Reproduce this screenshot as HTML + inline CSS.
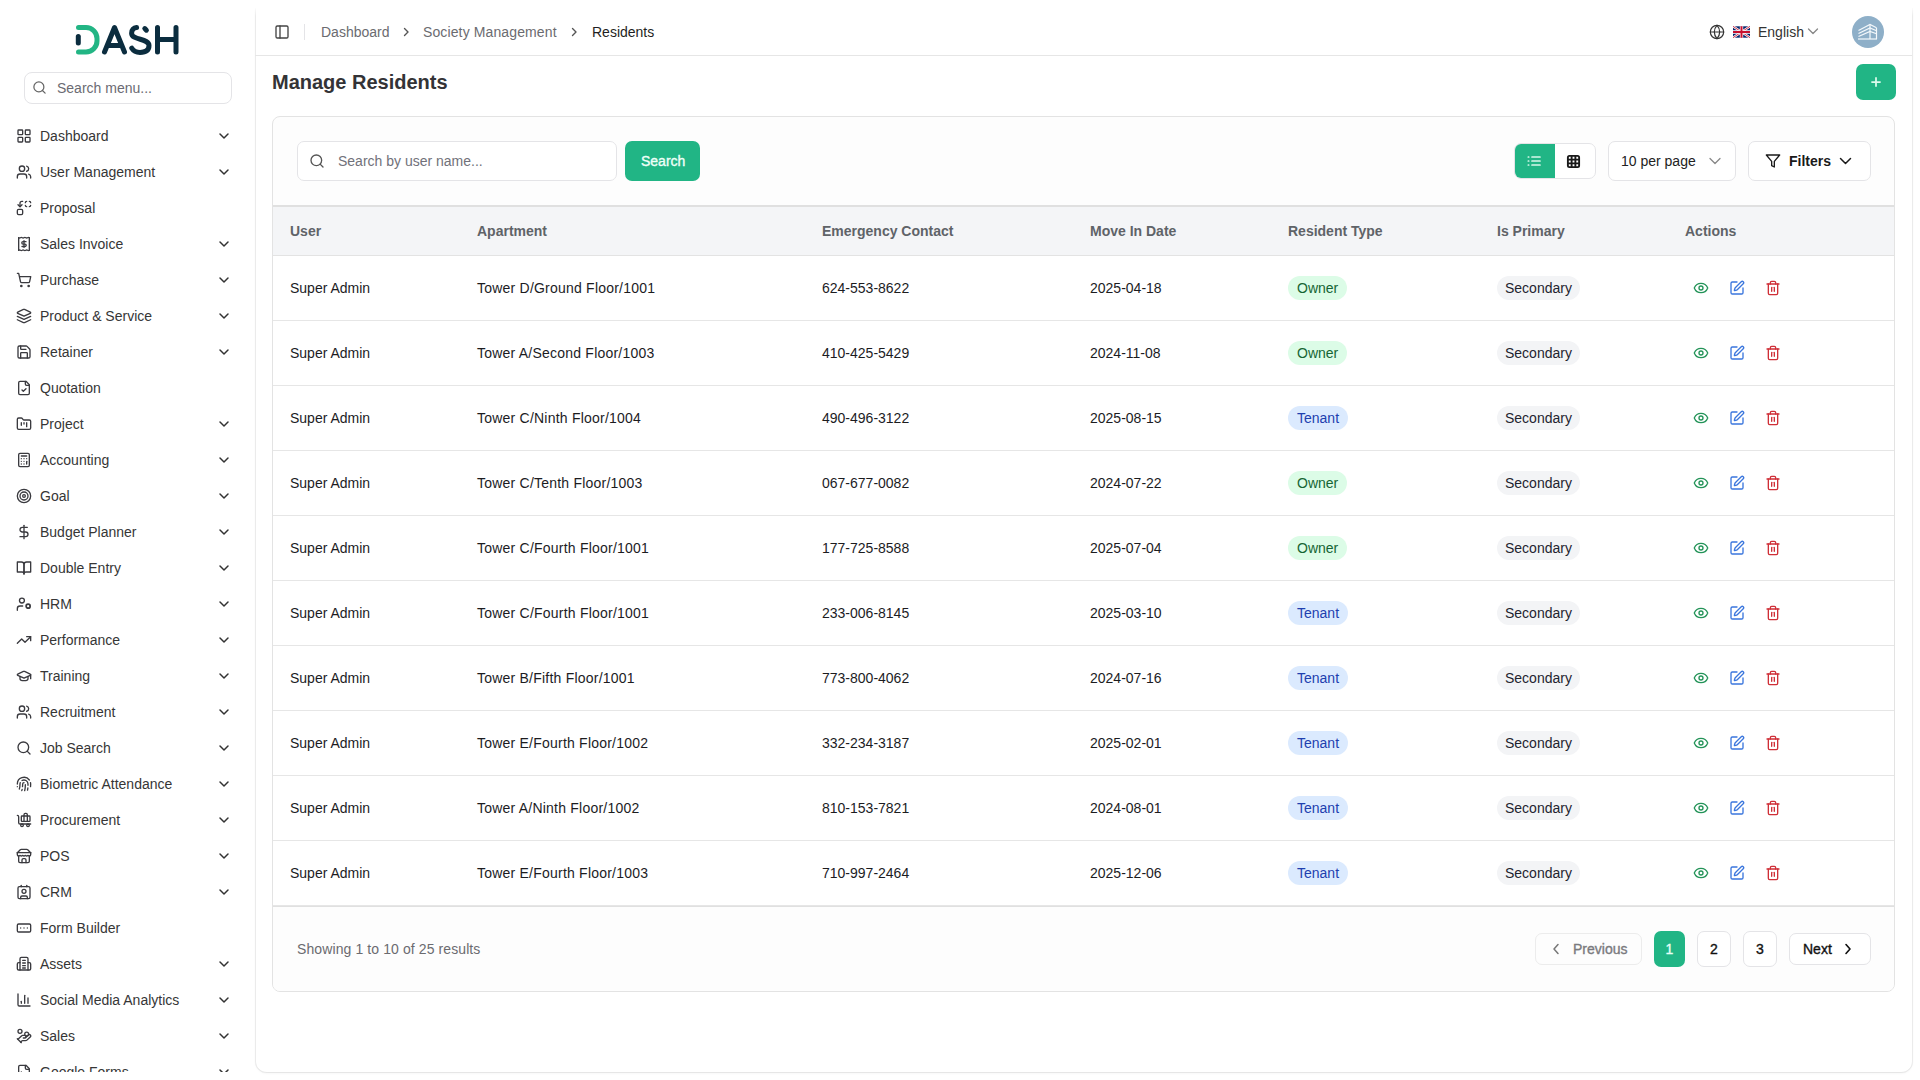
<!DOCTYPE html>
<html><head><meta charset="utf-8">
<style>
*{box-sizing:border-box;margin:0;padding:0}
html,body{width:1920px;height:1080px;overflow:hidden}
body{font-family:"Liberation Sans",sans-serif;font-size:14px;color:#1f2328;background:#fff;position:relative}
.abs{position:absolute}
svg{display:block}
/* sidebar */
#sb{position:absolute;left:0;top:0;width:255px;height:1080px;background:#fff}
#sbsearch{position:absolute;left:24px;top:72px;width:208px;height:32px;border:1px solid #e4e4e7;border-radius:8px;background:#fff}
#sbsearch .ph{position:absolute;left:32px;top:5px;line-height:20px;color:#6b6b73}
#menu{position:absolute;left:0;top:118px;width:255px;height:954px;overflow:hidden}
.mi{position:absolute;left:0;width:255px;height:36px}
.mi .ic{position:absolute;left:16px;top:10px;width:16px;height:16px;color:#3a3a3f}
.mi .t{position:absolute;left:40px;top:8px;line-height:20px;color:#363636;white-space:nowrap}
.mi .ch{position:absolute;left:216px;top:10px;width:16px;height:16px;color:#333}
/* main panel */
#panel{position:absolute;left:255px;top:8px;width:1658px;height:1065px;background:#fff;border-radius:0 0 12px 12px;box-shadow:inset 1px 0 0 #ebebeb,inset -1px 0 0 #ebebeb,inset 0 -1px 0 #e6e6e6,0 1px 2px rgba(0,0,0,.03)}
#ptopfade{position:absolute;left:240px;top:0;width:1680px;height:16px;background:linear-gradient(#fff 40%,rgba(255,255,255,0))}
#hdr{position:absolute;left:0;top:0;width:1657px;height:48px;border-bottom:1px solid #e6e6e6}
.bc{position:absolute;top:14px;line-height:20px;white-space:nowrap}
h1{position:absolute;left:17px;top:62px;font-size:20px;line-height:24px;font-weight:700;color:#333336;white-space:nowrap}
#card{position:absolute;left:17px;top:108px;width:1623px;height:876px;border:1px solid #e3e3e3;border-radius:8px;background:#fdfdfd;overflow:hidden}
.inp{position:absolute;background:#fff;border:1px solid #e4e4e7;border-radius:7px}
.btn-g{position:absolute;background:#21b585;border-radius:7px;color:#fff}
table{border-collapse:collapse}
#thead{position:absolute;left:0;top:88px;width:1621px;height:51px;background:#f4f5f7;border-top:2px solid #e0e0e0;border-bottom:1px solid #e3e3e3}
.th{position:absolute;top:14px;line-height:20px;font-weight:700;color:#5f6368;white-space:nowrap}
.row{position:absolute;left:0;width:1621px;height:65px;background:#fff;border-bottom:1px solid #e6e6e6}
.row .c{position:absolute;top:22px;line-height:20px;color:#1c1c1f;white-space:nowrap}
.badge{position:absolute;top:20px;height:24px;line-height:24px;padding:0 8px;border-radius:12px;white-space:nowrap}
.own{background:#dcfce7;color:#166534;padding:0 9px}
.ten{background:#dbeafe;color:#1e40af;padding:0 9px}
.sec{background:#f3f4f6;color:#1f2430}
.act{position:absolute;top:24px;width:16px;height:16px}
#foot{position:absolute;left:0;top:789px;width:1621px;height:86px;background:#fdfdfd;border-top:1px solid #e0e0e0}
.med{-webkit-text-stroke:0.35px currentColor}
.pg{position:absolute;border:1px solid #e4e4e7;border-radius:7px;background:#fff;text-align:center;white-space:nowrap}
</style></head>
<body>
<div id="sb">
  <!-- logo -->
  <svg class="abs" style="left:70px;top:18px" width="115" height="42" viewBox="70 18 115 42">
    <path d="M78.5 27.5 H86 A11 11 0 0 1 97 38.5 V41 A11 11 0 0 1 86 52 H78.5" fill="none" stroke="#22b584" stroke-width="5" stroke-linecap="round"/>
    <path d="M78.3 36.5 V43" stroke="#0b2d3f" stroke-width="5" stroke-linecap="round"/>
    <path d="M104.5 52 L114.5 27.5 L124.5 52 M108 45.5 H121" fill="none" stroke="#0b2d3f" stroke-width="5" stroke-linecap="round" stroke-linejoin="round"/>
    <path d="M136.6 27.5 C133.6 27.8 131.6 30 131.6 33.2 C131.6 40.5 149 38 149 45.5 C149 51 144.5 52.4 140 52.4 C136.5 52.4 133.5 51 131.8 48.2 M144.8 28.6 L146.4 30.2" fill="none" stroke="#0b2d3f" stroke-width="5" stroke-linecap="round"/>
    <path d="M157.5 27.5 V52 M176 27.5 V52 M157.5 39.5 H176" fill="none" stroke="#0b2d3f" stroke-width="5" stroke-linecap="round"/>
  </svg>
  <div id="sbsearch">
    <svg class="abs" style="left:7px;top:7px" width="15" height="15" viewBox="0 0 24 24" fill="none" stroke="#666" stroke-width="2" stroke-linecap="round"><circle cx="11" cy="11" r="8"/><path d="m21 21-4.3-4.3"/></svg>
    <span class="ph">Search menu...</span>
  </div>
  <div id="menu"><div class="mi" style="top:0px"><svg class="ic" viewBox="0 0 24 24" fill="none" stroke="currentColor" stroke-width="2" stroke-linecap="round" stroke-linejoin="round"><rect width="7" height="7" x="3" y="3" rx="1"/><rect width="7" height="7" x="14" y="3" rx="1"/><rect width="7" height="7" x="14" y="14" rx="1"/><rect width="7" height="7" x="3" y="14" rx="1"/></svg><span class="t">Dashboard</span><svg class="ch" viewBox="0 0 16 16" fill="none" stroke="currentColor" stroke-width="1.5" stroke-linecap="round" stroke-linejoin="round"><path d="M4 6 L8 10 L12 6"/></svg></div><div class="mi" style="top:36px"><svg class="ic" viewBox="0 0 24 24" fill="none" stroke="currentColor" stroke-width="2" stroke-linecap="round" stroke-linejoin="round"><path d="M16 21v-2a4 4 0 0 0-4-4H6a4 4 0 0 0-4 4v2"/><circle cx="9" cy="7" r="4"/><path d="M22 21v-2a4 4 0 0 0-3-3.87"/><path d="M16 3.13a4 4 0 0 1 0 7.75"/></svg><span class="t">User Management</span><svg class="ch" viewBox="0 0 16 16" fill="none" stroke="currentColor" stroke-width="1.5" stroke-linecap="round" stroke-linejoin="round"><path d="M4 6 L8 10 L12 6"/></svg></div><div class="mi" style="top:72px"><svg class="ic" viewBox="0 0 24 24" fill="none" stroke="currentColor" stroke-width="2" stroke-linecap="round" stroke-linejoin="round"><path d="M14 4a2 2 0 0 1 2-2"/><path d="M16 10a2 2 0 0 1-2-2"/><path d="M20 2a2 2 0 0 1 2 2"/><path d="M22 8a2 2 0 0 1-2 2"/><path d="m3 7 3 3 3-3"/><path d="M6 10V5a3 3 0 0 1 3-3h1"/><rect x="2" y="14" width="8" height="8" rx="2"/></svg><span class="t">Proposal</span></div><div class="mi" style="top:108px"><svg class="ic" viewBox="0 0 24 24" fill="none" stroke="currentColor" stroke-width="2" stroke-linecap="round" stroke-linejoin="round"><path d="M4 2.5V21.5M20 2.5V21.5"/><path d="M4 2.5q1.33 1 2.67 0t2.67 0t2.67 0t2.67 0t2.67 0t2.67 0M4 21.5q1.33 -1 2.67 0t2.67 0t2.67 0t2.67 0t2.67 0t2.67 0"/><path d="M15 8.5h-4.5a1.8 1.8 0 0 0 0 3.6h3a1.8 1.8 0 0 1 0 3.6H9"/><path d="M12 7v10"/></svg><span class="t">Sales Invoice</span><svg class="ch" viewBox="0 0 16 16" fill="none" stroke="currentColor" stroke-width="1.5" stroke-linecap="round" stroke-linejoin="round"><path d="M4 6 L8 10 L12 6"/></svg></div><div class="mi" style="top:144px"><svg class="ic" viewBox="0 0 24 24" fill="none" stroke="currentColor" stroke-width="2" stroke-linecap="round" stroke-linejoin="round"><circle cx="8" cy="21" r="1"/><circle cx="19" cy="21" r="1"/><path d="M2.05 2.05h2l2.66 12.42a2 2 0 0 0 2 1.58h9.78a2 2 0 0 0 1.95-1.57l1.65-7.43H5.12"/></svg><span class="t">Purchase</span><svg class="ch" viewBox="0 0 16 16" fill="none" stroke="currentColor" stroke-width="1.5" stroke-linecap="round" stroke-linejoin="round"><path d="M4 6 L8 10 L12 6"/></svg></div><div class="mi" style="top:180px"><svg class="ic" viewBox="0 0 24 24" fill="none" stroke="currentColor" stroke-width="2" stroke-linecap="round" stroke-linejoin="round"><path d="m12.83 2.18a2 2 0 0 0-1.66 0L2.6 6.08a1 1 0 0 0 0 1.83l8.58 3.91a2 2 0 0 0 1.66 0l8.58-3.9a1 1 0 0 0 0-1.83Z"/><path d="m22 17.65-9.17 4.16a2 2 0 0 1-1.66 0L2 17.65"/><path d="m22 12.65-9.17 4.16a2 2 0 0 1-1.66 0L2 12.65"/></svg><span class="t">Product &amp; Service</span><svg class="ch" viewBox="0 0 16 16" fill="none" stroke="currentColor" stroke-width="1.5" stroke-linecap="round" stroke-linejoin="round"><path d="M4 6 L8 10 L12 6"/></svg></div><div class="mi" style="top:216px"><svg class="ic" viewBox="0 0 24 24" fill="none" stroke="currentColor" stroke-width="2" stroke-linecap="round" stroke-linejoin="round"><path d="M15.2 3a2 2 0 0 1 1.4.6l3.8 3.8a2 2 0 0 1 .6 1.4V19a2 2 0 0 1-2 2H5a2 2 0 0 1-2-2V5a2 2 0 0 1 2-2z"/><path d="M17 21v-7a1 1 0 0 0-1-1H8a1 1 0 0 0-1 1v7"/><path d="M7 3v4a1 1 0 0 0 1 1h7"/></svg><span class="t">Retainer</span><svg class="ch" viewBox="0 0 16 16" fill="none" stroke="currentColor" stroke-width="1.5" stroke-linecap="round" stroke-linejoin="round"><path d="M4 6 L8 10 L12 6"/></svg></div><div class="mi" style="top:252px"><svg class="ic" viewBox="0 0 24 24" fill="none" stroke="currentColor" stroke-width="2" stroke-linecap="round" stroke-linejoin="round"><path d="M15 2H6a2 2 0 0 0-2 2v16a2 2 0 0 0 2 2h12a2 2 0 0 0 2-2V7Z"/><path d="M14 2v4a2 2 0 0 0 2 2h4"/><path d="m9 15 2 2 4-4"/></svg><span class="t">Quotation</span></div><div class="mi" style="top:288px"><svg class="ic" viewBox="0 0 24 24" fill="none" stroke="currentColor" stroke-width="2" stroke-linecap="round" stroke-linejoin="round"><path d="M4 20h16a2 2 0 0 0 2-2V8a2 2 0 0 0-2-2h-7.93a2 2 0 0 1-1.66-.9l-.82-1.2A2 2 0 0 0 7.93 3H4a2 2 0 0 0-2 2v13c0 1.1.9 2 2 2Z"/><path d="M8 10v4"/><path d="M12 10v2"/><path d="M16 10v6"/></svg><span class="t">Project</span><svg class="ch" viewBox="0 0 16 16" fill="none" stroke="currentColor" stroke-width="1.5" stroke-linecap="round" stroke-linejoin="round"><path d="M4 6 L8 10 L12 6"/></svg></div><div class="mi" style="top:324px"><svg class="ic" viewBox="0 0 24 24" fill="none" stroke="currentColor" stroke-width="2" stroke-linecap="round" stroke-linejoin="round"><rect width="16" height="20" x="4" y="2" rx="2"/><line x1="8" x2="16" y1="6" y2="6"/><line x1="16" x2="16" y1="14" y2="18"/><path d="M16 10h.01"/><path d="M12 10h.01"/><path d="M8 10h.01"/><path d="M12 14h.01"/><path d="M8 14h.01"/><path d="M12 18h.01"/><path d="M8 18h.01"/></svg><span class="t">Accounting</span><svg class="ch" viewBox="0 0 16 16" fill="none" stroke="currentColor" stroke-width="1.5" stroke-linecap="round" stroke-linejoin="round"><path d="M4 6 L8 10 L12 6"/></svg></div><div class="mi" style="top:360px"><svg class="ic" viewBox="0 0 24 24" fill="none" stroke="currentColor" stroke-width="2" stroke-linecap="round" stroke-linejoin="round"><circle cx="12" cy="12" r="10"/><circle cx="12" cy="12" r="6"/><circle cx="12" cy="12" r="2"/></svg><span class="t">Goal</span><svg class="ch" viewBox="0 0 16 16" fill="none" stroke="currentColor" stroke-width="1.5" stroke-linecap="round" stroke-linejoin="round"><path d="M4 6 L8 10 L12 6"/></svg></div><div class="mi" style="top:396px"><svg class="ic" viewBox="0 0 24 24" fill="none" stroke="currentColor" stroke-width="2" stroke-linecap="round" stroke-linejoin="round"><line x1="12" x2="12" y1="2" y2="22"/><path d="M17 5H9.5a3.5 3.5 0 0 0 0 7h5a3.5 3.5 0 0 1 0 7H6"/></svg><span class="t">Budget Planner</span><svg class="ch" viewBox="0 0 16 16" fill="none" stroke="currentColor" stroke-width="1.5" stroke-linecap="round" stroke-linejoin="round"><path d="M4 6 L8 10 L12 6"/></svg></div><div class="mi" style="top:432px"><svg class="ic" viewBox="0 0 24 24" fill="none" stroke="currentColor" stroke-width="2" stroke-linecap="round" stroke-linejoin="round"><path d="M2 3h6a4 4 0 0 1 4 4v14a3 3 0 0 0-3-3H2z"/><path d="M22 3h-6a4 4 0 0 0-4 4v14a3 3 0 0 1 3-3h7z"/></svg><span class="t">Double Entry</span><svg class="ch" viewBox="0 0 16 16" fill="none" stroke="currentColor" stroke-width="1.5" stroke-linecap="round" stroke-linejoin="round"><path d="M4 6 L8 10 L12 6"/></svg></div><div class="mi" style="top:468px"><svg class="ic" viewBox="0 0 24 24" fill="none" stroke="currentColor" stroke-width="2" stroke-linecap="round" stroke-linejoin="round"><circle cx="8.9" cy="6.8" r="3.7"/><path d="M2 21.5V19a4 4 0 0 1 4-4h4"/><circle cx="18.2" cy="15.2" r="3" stroke-width="2.6"/></svg><span class="t">HRM</span><svg class="ch" viewBox="0 0 16 16" fill="none" stroke="currentColor" stroke-width="1.5" stroke-linecap="round" stroke-linejoin="round"><path d="M4 6 L8 10 L12 6"/></svg></div><div class="mi" style="top:504px"><svg class="ic" viewBox="0 0 24 24" fill="none" stroke="currentColor" stroke-width="2" stroke-linecap="round" stroke-linejoin="round"><polyline points="22 7 13.5 15.5 8.5 10.5 2 17"/><polyline points="16 7 22 7 22 13"/></svg><span class="t">Performance</span><svg class="ch" viewBox="0 0 16 16" fill="none" stroke="currentColor" stroke-width="1.5" stroke-linecap="round" stroke-linejoin="round"><path d="M4 6 L8 10 L12 6"/></svg></div><div class="mi" style="top:540px"><svg class="ic" viewBox="0 0 24 24" fill="none" stroke="currentColor" stroke-width="2" stroke-linecap="round" stroke-linejoin="round"><path d="M21.42 10.922a1 1 0 0 0-.019-1.838L12.83 5.18a2 2 0 0 0-1.66 0L2.6 9.08a1 1 0 0 0 0 1.832l8.57 3.908a2 2 0 0 0 1.66 0z"/><path d="M22 10v6"/><path d="M6 12.5V16a6 3 0 0 0 12 0v-3.5"/></svg><span class="t">Training</span><svg class="ch" viewBox="0 0 16 16" fill="none" stroke="currentColor" stroke-width="1.5" stroke-linecap="round" stroke-linejoin="round"><path d="M4 6 L8 10 L12 6"/></svg></div><div class="mi" style="top:576px"><svg class="ic" viewBox="0 0 24 24" fill="none" stroke="currentColor" stroke-width="2" stroke-linecap="round" stroke-linejoin="round"><path d="M16 21v-2a4 4 0 0 0-4-4H6a4 4 0 0 0-4 4v2"/><circle cx="9" cy="7" r="4"/><path d="M22 21v-2a4 4 0 0 0-3-3.87"/><path d="M16 3.13a4 4 0 0 1 0 7.75"/></svg><span class="t">Recruitment</span><svg class="ch" viewBox="0 0 16 16" fill="none" stroke="currentColor" stroke-width="1.5" stroke-linecap="round" stroke-linejoin="round"><path d="M4 6 L8 10 L12 6"/></svg></div><div class="mi" style="top:612px"><svg class="ic" viewBox="0 0 24 24" fill="none" stroke="currentColor" stroke-width="2" stroke-linecap="round" stroke-linejoin="round"><circle cx="11" cy="11" r="8"/><path d="m21 21-4.3-4.3"/></svg><span class="t">Job Search</span><svg class="ch" viewBox="0 0 16 16" fill="none" stroke="currentColor" stroke-width="1.5" stroke-linecap="round" stroke-linejoin="round"><path d="M4 6 L8 10 L12 6"/></svg></div><div class="mi" style="top:648px"><svg class="ic" viewBox="0 0 24 24" fill="none" stroke="currentColor" stroke-width="2" stroke-linecap="round" stroke-linejoin="round"><path d="M12 10a2 2 0 0 0-2 2c0 1.02-.1 2.51-.26 4"/><path d="M14 13.12c0 2.38 0 6.38-1 8.88"/><path d="M17.29 21.02c.12-.6.43-2.3.5-3.02"/><path d="M2 12a10 10 0 0 1 18-6"/><path d="M2 16h.01"/><path d="M21.8 16c.2-2 .131-5.354 0-6"/><path d="M5 19.5C5.5 18 6 15 6 12a6 6 0 0 1 .34-2"/><path d="M8.65 22c.21-.66.45-1.32.57-2"/><path d="M9 6.8a6 6 0 0 1 9 5.2v2"/></svg><span class="t">Biometric Attendance</span><svg class="ch" viewBox="0 0 16 16" fill="none" stroke="currentColor" stroke-width="1.5" stroke-linecap="round" stroke-linejoin="round"><path d="M4 6 L8 10 L12 6"/></svg></div><div class="mi" style="top:684px"><svg class="ic" viewBox="0 0 24 24" fill="none" stroke="currentColor" stroke-width="2" stroke-linecap="round" stroke-linejoin="round"><path d="M22 18H6a2 2 0 0 1-2-2V7a2 2 0 0 0-2-2"/><path d="M17 14V4a2 2 0 0 0-2-2h-1a2 2 0 0 0-2 2v10"/><rect width="13" height="8" x="8" y="6" rx="1"/><circle cx="18" cy="20" r="2"/><circle cx="9" cy="20" r="2"/></svg><span class="t">Procurement</span><svg class="ch" viewBox="0 0 16 16" fill="none" stroke="currentColor" stroke-width="1.5" stroke-linecap="round" stroke-linejoin="round"><path d="M4 6 L8 10 L12 6"/></svg></div><div class="mi" style="top:720px"><svg class="ic" viewBox="0 0 24 24" fill="none" stroke="currentColor" stroke-width="2" stroke-linecap="round" stroke-linejoin="round"><path d="m2 7 4.41-4.41A2 2 0 0 1 7.83 2h8.34a2 2 0 0 1 1.42.59L22 7"/><path d="M4 12v8a2 2 0 0 0 2 2h12a2 2 0 0 0 2-2v-8"/><path d="M15 22v-4a2 2 0 0 0-2-2h-2a2 2 0 0 0-2 2v4"/><path d="M2 7h20"/><path d="M22 7v3a2 2 0 0 1-2 2a2.7 2.7 0 0 1-1.59-.63.7.7 0 0 0-.82 0A2.7 2.7 0 0 1 16 12a2.7 2.7 0 0 1-1.59-.63.7.7 0 0 0-.82 0A2.7 2.7 0 0 1 12 12a2.7 2.7 0 0 1-1.59-.63.7.7 0 0 0-.82 0A2.7 2.7 0 0 1 8 12a2.7 2.7 0 0 1-1.59-.63.7.7 0 0 0-.82 0A2.7 2.7 0 0 1 4 12a2 2 0 0 1-2-2V7"/></svg><span class="t">POS</span><svg class="ch" viewBox="0 0 16 16" fill="none" stroke="currentColor" stroke-width="1.5" stroke-linecap="round" stroke-linejoin="round"><path d="M4 6 L8 10 L12 6"/></svg></div><div class="mi" style="top:756px"><svg class="ic" viewBox="0 0 24 24" fill="none" stroke="currentColor" stroke-width="2" stroke-linecap="round" stroke-linejoin="round"><path d="M16 2v2"/><path d="M7 22v-2a2 2 0 0 1 2-2h6a2 2 0 0 1 2 2v2"/><path d="M8 2v2"/><circle cx="12" cy="11" r="3"/><rect x="3" y="4" width="18" height="18" rx="2"/></svg><span class="t">CRM</span><svg class="ch" viewBox="0 0 16 16" fill="none" stroke="currentColor" stroke-width="1.5" stroke-linecap="round" stroke-linejoin="round"><path d="M4 6 L8 10 L12 6"/></svg></div><div class="mi" style="top:792px"><svg class="ic" viewBox="0 0 24 24" fill="none" stroke="currentColor" stroke-width="2" stroke-linecap="round" stroke-linejoin="round"><rect width="20" height="12" x="2" y="6" rx="2"/><path d="M12 12h.01"/><path d="M17 12h.01"/><path d="M7 12h.01"/></svg><span class="t">Form Builder</span></div><div class="mi" style="top:828px"><svg class="ic" viewBox="0 0 24 24" fill="none" stroke="currentColor" stroke-width="2" stroke-linecap="round" stroke-linejoin="round"><path d="M6 21V4a2 2 0 0 1 2-2h8a2 2 0 0 1 2 2v17"/><path d="M6 10H4a2 2 0 0 0-2 2v7a2 2 0 0 0 2 2h16a2 2 0 0 0 2-2v-7a2 2 0 0 0-2-2h-2"/><path d="M10 6.5h4M10 10.5h4M10 14.5h4M10 18h4"/></svg><span class="t">Assets</span><svg class="ch" viewBox="0 0 16 16" fill="none" stroke="currentColor" stroke-width="1.5" stroke-linecap="round" stroke-linejoin="round"><path d="M4 6 L8 10 L12 6"/></svg></div><div class="mi" style="top:864px"><svg class="ic" viewBox="0 0 24 24" fill="none" stroke="currentColor" stroke-width="2" stroke-linecap="round" stroke-linejoin="round"><path d="M3 3v16a2 2 0 0 0 2 2h16"/><path d="M18 17V9"/><path d="M13 17V5"/><path d="M8 17v-3"/></svg><span class="t">Social Media Analytics</span><svg class="ch" viewBox="0 0 16 16" fill="none" stroke="currentColor" stroke-width="1.5" stroke-linecap="round" stroke-linejoin="round"><path d="M4 6 L8 10 L12 6"/></svg></div><div class="mi" style="top:900px"><svg class="ic" viewBox="0 0 24 24" fill="none" stroke="currentColor" stroke-width="2" stroke-linecap="round" stroke-linejoin="round"><path d="M11 15h2a2 2 0 1 0 0-4h-3c-.6 0-1.1.2-1.4.6L3 17"/><path d="m7 21 1.6-1.4c.3-.4.8-.6 1.4-.6h4c1.1 0 2.1-.4 2.8-1.2l4.6-4.4a2 2 0 0 0-2.75-2.91l-4.2 3.9"/><path d="m2 16 6 6"/><circle cx="16" cy="9" r="2.9"/><circle cx="6" cy="5" r="3"/></svg><span class="t">Sales</span><svg class="ch" viewBox="0 0 16 16" fill="none" stroke="currentColor" stroke-width="1.5" stroke-linecap="round" stroke-linejoin="round"><path d="M4 6 L8 10 L12 6"/></svg></div><div class="mi" style="top:936px"><svg class="ic" viewBox="0 0 24 24" fill="none" stroke="currentColor" stroke-width="2" stroke-linecap="round" stroke-linejoin="round"><path d="M15 2H6a2 2 0 0 0-2 2v16a2 2 0 0 0 2 2h12a2 2 0 0 0 2-2V7Z"/><path d="M14 2v4a2 2 0 0 0 2 2h4"/><path d="M8 12h.01M8 16h.01"/></svg><span class="t">Google Forms</span><svg class="ch" viewBox="0 0 16 16" fill="none" stroke="currentColor" stroke-width="1.5" stroke-linecap="round" stroke-linejoin="round"><path d="M4 6 L8 10 L12 6"/></svg></div></div>
</div>

<div id="panel">
  <div id="hdr">
    <svg class="abs" style="left:19px;top:16px" width="16" height="16" viewBox="0 0 24 24" fill="none" stroke="#444" stroke-width="2" stroke-linecap="round" stroke-linejoin="round"><rect width="18" height="18" x="3" y="3" rx="2"/><path d="M9 3v18"/></svg>
    <div class="abs" style="left:49px;top:16px;width:1px;height:16px;background:#e4e4e7"></div>
    <span class="bc" style="left:66px;color:#6b6b70">Dashboard</span>
    <svg class="abs" style="left:143px;top:16px" width="16" height="16" viewBox="0 0 16 16" fill="none" stroke="#555" stroke-width="1.4" stroke-linecap="round" stroke-linejoin="round"><path d="M6.5 4.5 L10 8 L6.5 11.5"/></svg>
    <span class="bc" style="left:168px;color:#6b6b70;letter-spacing:0.12px">Society Management</span>
    <svg class="abs" style="left:311px;top:16px" width="16" height="16" viewBox="0 0 16 16" fill="none" stroke="#555" stroke-width="1.4" stroke-linecap="round" stroke-linejoin="round"><path d="M6.5 4.5 L10 8 L6.5 11.5"/></svg>
    <span class="bc" style="left:337px;color:#1f1f23">Residents</span>
    <!-- right -->
    <svg class="abs" style="left:1454px;top:16px" width="16" height="16" viewBox="0 0 24 24" fill="none" stroke="#333" stroke-width="1.8" stroke-linecap="round"><circle cx="12" cy="12" r="10"/><path d="M12 2a14.5 14.5 0 0 0 0 20 14.5 14.5 0 0 0 0-20"/><path d="M2 12h20"/></svg>
    <svg class="abs" style="left:1478px;top:18px" width="17" height="12" viewBox="0 0 60 40"><rect width="60" height="40" fill="#012169"/><path d="M0 0L60 40M60 0L0 40" stroke="#fff" stroke-width="8"/><path d="M0 0L60 40M60 0L0 40" stroke="#C8102E" stroke-width="3"/><path d="M30 0V40M0 20H60" stroke="#fff" stroke-width="12"/><path d="M30 0V40M0 20H60" stroke="#C8102E" stroke-width="7"/></svg>
    <span class="bc" style="left:1503px;color:#333">English</span>
    <svg class="abs" style="left:1550px;top:15px" width="16" height="16" viewBox="0 0 16 16" fill="none" stroke="#888" stroke-width="1.3" stroke-linecap="round" stroke-linejoin="round"><path d="M3.5 6 L8 10.5 L12.5 6"/></svg>
    <div class="abs" style="left:1597px;top:8px;width:32px;height:32px;border-radius:50%;background:#8eafc8">
      <svg class="abs" style="left:6px;top:7px" width="20" height="18" viewBox="0 0 20 18" fill="none" stroke="#f4f8fb" stroke-width="1.2"><path d="M0.5 7.5 L12 1.5 L18.5 4.8"/><path d="M0.5 10.5 L12 5 L18.5 7.8"/><path d="M0.5 13.5 L12 8.5 L18.5 10.8"/><path d="M0 16 H19"/><path d="M12 1.5 V16"/><path d="M18.5 4.8 V16"/></svg>
    </div>
  </div>
  <h1>Manage Residents</h1>
  <div class="btn-g" style="left:1601px;top:56px;width:40px;height:36px">
    <svg class="abs" style="left:13px;top:11px" width="14" height="14" viewBox="0 0 24 24" fill="none" stroke="#dcfaec" stroke-width="3" stroke-linecap="butt"><path d="M4 12h16M12 4v16"/></svg>
  </div>

  <div id="card">
    <div class="inp" style="left:24px;top:24px;width:320px;height:40px">
      <svg class="abs" style="left:11px;top:11px" width="16" height="16" viewBox="0 0 24 24" fill="none" stroke="#555" stroke-width="2" stroke-linecap="round"><circle cx="11" cy="11" r="8"/><path d="m21 21-4.3-4.3"/></svg>
      <span class="abs" style="left:40px;top:9px;line-height:20px;color:#71717a">Search by user name...</span>
    </div>
    <div class="btn-g" style="left:352px;top:24px;width:75px;height:40px"><span class="abs med" style="left:16px;top:10px;line-height:20px;color:#effff8">Search</span></div>

    <div class="abs" style="left:1241px;top:26px;width:82px;height:36px;border:1px solid #e4e4e7;border-radius:7px;background:#fff;overflow:hidden">
      <div class="abs" style="left:-1px;top:-1px;width:41px;height:36px;background:#21b585"></div>
      <svg class="abs" style="left:11px;top:9px" width="16" height="16" viewBox="0 0 24 24" fill="none" stroke="#d8f7ea" stroke-width="2.6" stroke-linecap="round"><path d="M9 6h12M9 12h12M9 18h12M3.5 6h.5M3.5 12h.5M3.5 18h.5"/></svg>
      <svg class="abs" style="left:51px;top:10px" width="15" height="15" viewBox="0 0 24 24" fill="none" stroke="#1a1a1a" stroke-width="3"><rect x="3" y="3" width="18" height="18" rx="2.5"/><path d="M3 9h18M3 15h18M9 3v18M15 3v18"/></svg>
    </div>
    <div class="inp" style="left:1335px;top:24px;width:128px;height:40px">
      <span class="abs" style="left:12px;top:9px;line-height:20px;color:#222">10 per page</span>
      <svg class="abs" style="left:98px;top:11px" width="16" height="16" viewBox="0 0 16 16" fill="none" stroke="#888" stroke-width="1.3" stroke-linecap="round" stroke-linejoin="round"><path d="M3 5.5 L8 10.5 L13 5.5"/></svg>
    </div>
    <div class="inp" style="left:1475px;top:24px;width:123px;height:40px">
      <svg class="abs" style="left:16px;top:11px" width="16" height="16" viewBox="0 0 24 24" fill="none" stroke="#1a1a1a" stroke-width="2" stroke-linejoin="round"><path d="M22 3H2l8 9.46V19l4 2v-8.54L22 3z"/></svg>
      <span class="abs" style="left:40px;top:9px;line-height:20px;color:#1a1a1a;font-weight:700">Filters</span>
      <svg class="abs" style="left:88px;top:11px" width="16" height="16" viewBox="0 0 16 16" fill="none" stroke="#1a1a1a" stroke-width="1.5" stroke-linecap="round" stroke-linejoin="round"><path d="M3.5 5.5 L8.5 10.5 L13.5 5.5"/></svg>
    </div>

    <div id="thead">
      <span class="th" style="left:17px">User</span>
      <span class="th" style="left:204px">Apartment</span>
      <span class="th" style="left:549px">Emergency Contact</span>
      <span class="th" style="left:817px">Move In Date</span>
      <span class="th" style="left:1015px">Resident Type</span>
      <span class="th" style="left:1224px">Is Primary</span>
      <span class="th" style="left:1412px">Actions</span>
    </div>
    <div class="row" style="top:139px"><span class="c" style="left:17px">Super Admin</span><span class="c" style="left:204px;letter-spacing:0.22px">Tower D/Ground Floor/1001</span><span class="c" style="left:549px">624-553-8622</span><span class="c" style="left:817px">2025-04-18</span><span class="badge own" style="left:1015px">Owner</span><span class="badge sec" style="left:1224px">Secondary</span><svg class="act" style="left:1420px;color:#239358" viewBox="0 0 24 24" fill="none" stroke="currentColor" stroke-width="2" stroke-linecap="round" stroke-linejoin="round"><path d="M2.062 12.348a1 1 0 0 1 0-.696 10.75 10.75 0 0 1 19.876 0 1 1 0 0 1 0 .696 10.75 10.75 0 0 1-19.876 0"/><circle cx="12" cy="12" r="3"/></svg><svg class="act" style="left:1456px;color:#3a76dd" viewBox="0 0 24 24" fill="none" stroke="currentColor" stroke-width="2" stroke-linecap="round" stroke-linejoin="round"><path d="M12 3H5a2 2 0 0 0-2 2v14a2 2 0 0 0 2 2h14a2 2 0 0 0 2-2v-7"/><path d="M18.375 2.625a1 1 0 0 1 3 3l-9.013 9.014a2 2 0 0 1-.853.505l-2.873.84a.5.5 0 0 1-.62-.62l.84-2.873a2 2 0 0 1 .506-.852z"/></svg><svg class="act" style="left:1492px;color:#cf2f37" viewBox="0 0 24 24" fill="none" stroke="currentColor" stroke-width="2" stroke-linecap="round" stroke-linejoin="round"><path d="M3 6h18"/><path d="M19 6v14c0 1-1 2-2 2H7c-1 0-2-1-2-2V6"/><path d="M8 6V4c0-1 1-2 2-2h4c1 0 2 1 2 2v2"/><line x1="10" x2="10" y1="11" y2="17"/><line x1="14" x2="14" y1="11" y2="17"/></svg></div><div class="row" style="top:204px"><span class="c" style="left:17px">Super Admin</span><span class="c" style="left:204px;letter-spacing:0.22px">Tower A/Second Floor/1003</span><span class="c" style="left:549px">410-425-5429</span><span class="c" style="left:817px">2024-11-08</span><span class="badge own" style="left:1015px">Owner</span><span class="badge sec" style="left:1224px">Secondary</span><svg class="act" style="left:1420px;color:#239358" viewBox="0 0 24 24" fill="none" stroke="currentColor" stroke-width="2" stroke-linecap="round" stroke-linejoin="round"><path d="M2.062 12.348a1 1 0 0 1 0-.696 10.75 10.75 0 0 1 19.876 0 1 1 0 0 1 0 .696 10.75 10.75 0 0 1-19.876 0"/><circle cx="12" cy="12" r="3"/></svg><svg class="act" style="left:1456px;color:#3a76dd" viewBox="0 0 24 24" fill="none" stroke="currentColor" stroke-width="2" stroke-linecap="round" stroke-linejoin="round"><path d="M12 3H5a2 2 0 0 0-2 2v14a2 2 0 0 0 2 2h14a2 2 0 0 0 2-2v-7"/><path d="M18.375 2.625a1 1 0 0 1 3 3l-9.013 9.014a2 2 0 0 1-.853.505l-2.873.84a.5.5 0 0 1-.62-.62l.84-2.873a2 2 0 0 1 .506-.852z"/></svg><svg class="act" style="left:1492px;color:#cf2f37" viewBox="0 0 24 24" fill="none" stroke="currentColor" stroke-width="2" stroke-linecap="round" stroke-linejoin="round"><path d="M3 6h18"/><path d="M19 6v14c0 1-1 2-2 2H7c-1 0-2-1-2-2V6"/><path d="M8 6V4c0-1 1-2 2-2h4c1 0 2 1 2 2v2"/><line x1="10" x2="10" y1="11" y2="17"/><line x1="14" x2="14" y1="11" y2="17"/></svg></div><div class="row" style="top:269px"><span class="c" style="left:17px">Super Admin</span><span class="c" style="left:204px;letter-spacing:0.22px">Tower C/Ninth Floor/1004</span><span class="c" style="left:549px">490-496-3122</span><span class="c" style="left:817px">2025-08-15</span><span class="badge ten" style="left:1015px">Tenant</span><span class="badge sec" style="left:1224px">Secondary</span><svg class="act" style="left:1420px;color:#239358" viewBox="0 0 24 24" fill="none" stroke="currentColor" stroke-width="2" stroke-linecap="round" stroke-linejoin="round"><path d="M2.062 12.348a1 1 0 0 1 0-.696 10.75 10.75 0 0 1 19.876 0 1 1 0 0 1 0 .696 10.75 10.75 0 0 1-19.876 0"/><circle cx="12" cy="12" r="3"/></svg><svg class="act" style="left:1456px;color:#3a76dd" viewBox="0 0 24 24" fill="none" stroke="currentColor" stroke-width="2" stroke-linecap="round" stroke-linejoin="round"><path d="M12 3H5a2 2 0 0 0-2 2v14a2 2 0 0 0 2 2h14a2 2 0 0 0 2-2v-7"/><path d="M18.375 2.625a1 1 0 0 1 3 3l-9.013 9.014a2 2 0 0 1-.853.505l-2.873.84a.5.5 0 0 1-.62-.62l.84-2.873a2 2 0 0 1 .506-.852z"/></svg><svg class="act" style="left:1492px;color:#cf2f37" viewBox="0 0 24 24" fill="none" stroke="currentColor" stroke-width="2" stroke-linecap="round" stroke-linejoin="round"><path d="M3 6h18"/><path d="M19 6v14c0 1-1 2-2 2H7c-1 0-2-1-2-2V6"/><path d="M8 6V4c0-1 1-2 2-2h4c1 0 2 1 2 2v2"/><line x1="10" x2="10" y1="11" y2="17"/><line x1="14" x2="14" y1="11" y2="17"/></svg></div><div class="row" style="top:334px"><span class="c" style="left:17px">Super Admin</span><span class="c" style="left:204px;letter-spacing:0.22px">Tower C/Tenth Floor/1003</span><span class="c" style="left:549px">067-677-0082</span><span class="c" style="left:817px">2024-07-22</span><span class="badge own" style="left:1015px">Owner</span><span class="badge sec" style="left:1224px">Secondary</span><svg class="act" style="left:1420px;color:#239358" viewBox="0 0 24 24" fill="none" stroke="currentColor" stroke-width="2" stroke-linecap="round" stroke-linejoin="round"><path d="M2.062 12.348a1 1 0 0 1 0-.696 10.75 10.75 0 0 1 19.876 0 1 1 0 0 1 0 .696 10.75 10.75 0 0 1-19.876 0"/><circle cx="12" cy="12" r="3"/></svg><svg class="act" style="left:1456px;color:#3a76dd" viewBox="0 0 24 24" fill="none" stroke="currentColor" stroke-width="2" stroke-linecap="round" stroke-linejoin="round"><path d="M12 3H5a2 2 0 0 0-2 2v14a2 2 0 0 0 2 2h14a2 2 0 0 0 2-2v-7"/><path d="M18.375 2.625a1 1 0 0 1 3 3l-9.013 9.014a2 2 0 0 1-.853.505l-2.873.84a.5.5 0 0 1-.62-.62l.84-2.873a2 2 0 0 1 .506-.852z"/></svg><svg class="act" style="left:1492px;color:#cf2f37" viewBox="0 0 24 24" fill="none" stroke="currentColor" stroke-width="2" stroke-linecap="round" stroke-linejoin="round"><path d="M3 6h18"/><path d="M19 6v14c0 1-1 2-2 2H7c-1 0-2-1-2-2V6"/><path d="M8 6V4c0-1 1-2 2-2h4c1 0 2 1 2 2v2"/><line x1="10" x2="10" y1="11" y2="17"/><line x1="14" x2="14" y1="11" y2="17"/></svg></div><div class="row" style="top:399px"><span class="c" style="left:17px">Super Admin</span><span class="c" style="left:204px;letter-spacing:0.22px">Tower C/Fourth Floor/1001</span><span class="c" style="left:549px">177-725-8588</span><span class="c" style="left:817px">2025-07-04</span><span class="badge own" style="left:1015px">Owner</span><span class="badge sec" style="left:1224px">Secondary</span><svg class="act" style="left:1420px;color:#239358" viewBox="0 0 24 24" fill="none" stroke="currentColor" stroke-width="2" stroke-linecap="round" stroke-linejoin="round"><path d="M2.062 12.348a1 1 0 0 1 0-.696 10.75 10.75 0 0 1 19.876 0 1 1 0 0 1 0 .696 10.75 10.75 0 0 1-19.876 0"/><circle cx="12" cy="12" r="3"/></svg><svg class="act" style="left:1456px;color:#3a76dd" viewBox="0 0 24 24" fill="none" stroke="currentColor" stroke-width="2" stroke-linecap="round" stroke-linejoin="round"><path d="M12 3H5a2 2 0 0 0-2 2v14a2 2 0 0 0 2 2h14a2 2 0 0 0 2-2v-7"/><path d="M18.375 2.625a1 1 0 0 1 3 3l-9.013 9.014a2 2 0 0 1-.853.505l-2.873.84a.5.5 0 0 1-.62-.62l.84-2.873a2 2 0 0 1 .506-.852z"/></svg><svg class="act" style="left:1492px;color:#cf2f37" viewBox="0 0 24 24" fill="none" stroke="currentColor" stroke-width="2" stroke-linecap="round" stroke-linejoin="round"><path d="M3 6h18"/><path d="M19 6v14c0 1-1 2-2 2H7c-1 0-2-1-2-2V6"/><path d="M8 6V4c0-1 1-2 2-2h4c1 0 2 1 2 2v2"/><line x1="10" x2="10" y1="11" y2="17"/><line x1="14" x2="14" y1="11" y2="17"/></svg></div><div class="row" style="top:464px"><span class="c" style="left:17px">Super Admin</span><span class="c" style="left:204px;letter-spacing:0.22px">Tower C/Fourth Floor/1001</span><span class="c" style="left:549px">233-006-8145</span><span class="c" style="left:817px">2025-03-10</span><span class="badge ten" style="left:1015px">Tenant</span><span class="badge sec" style="left:1224px">Secondary</span><svg class="act" style="left:1420px;color:#239358" viewBox="0 0 24 24" fill="none" stroke="currentColor" stroke-width="2" stroke-linecap="round" stroke-linejoin="round"><path d="M2.062 12.348a1 1 0 0 1 0-.696 10.75 10.75 0 0 1 19.876 0 1 1 0 0 1 0 .696 10.75 10.75 0 0 1-19.876 0"/><circle cx="12" cy="12" r="3"/></svg><svg class="act" style="left:1456px;color:#3a76dd" viewBox="0 0 24 24" fill="none" stroke="currentColor" stroke-width="2" stroke-linecap="round" stroke-linejoin="round"><path d="M12 3H5a2 2 0 0 0-2 2v14a2 2 0 0 0 2 2h14a2 2 0 0 0 2-2v-7"/><path d="M18.375 2.625a1 1 0 0 1 3 3l-9.013 9.014a2 2 0 0 1-.853.505l-2.873.84a.5.5 0 0 1-.62-.62l.84-2.873a2 2 0 0 1 .506-.852z"/></svg><svg class="act" style="left:1492px;color:#cf2f37" viewBox="0 0 24 24" fill="none" stroke="currentColor" stroke-width="2" stroke-linecap="round" stroke-linejoin="round"><path d="M3 6h18"/><path d="M19 6v14c0 1-1 2-2 2H7c-1 0-2-1-2-2V6"/><path d="M8 6V4c0-1 1-2 2-2h4c1 0 2 1 2 2v2"/><line x1="10" x2="10" y1="11" y2="17"/><line x1="14" x2="14" y1="11" y2="17"/></svg></div><div class="row" style="top:529px"><span class="c" style="left:17px">Super Admin</span><span class="c" style="left:204px;letter-spacing:0.22px">Tower B/Fifth Floor/1001</span><span class="c" style="left:549px">773-800-4062</span><span class="c" style="left:817px">2024-07-16</span><span class="badge ten" style="left:1015px">Tenant</span><span class="badge sec" style="left:1224px">Secondary</span><svg class="act" style="left:1420px;color:#239358" viewBox="0 0 24 24" fill="none" stroke="currentColor" stroke-width="2" stroke-linecap="round" stroke-linejoin="round"><path d="M2.062 12.348a1 1 0 0 1 0-.696 10.75 10.75 0 0 1 19.876 0 1 1 0 0 1 0 .696 10.75 10.75 0 0 1-19.876 0"/><circle cx="12" cy="12" r="3"/></svg><svg class="act" style="left:1456px;color:#3a76dd" viewBox="0 0 24 24" fill="none" stroke="currentColor" stroke-width="2" stroke-linecap="round" stroke-linejoin="round"><path d="M12 3H5a2 2 0 0 0-2 2v14a2 2 0 0 0 2 2h14a2 2 0 0 0 2-2v-7"/><path d="M18.375 2.625a1 1 0 0 1 3 3l-9.013 9.014a2 2 0 0 1-.853.505l-2.873.84a.5.5 0 0 1-.62-.62l.84-2.873a2 2 0 0 1 .506-.852z"/></svg><svg class="act" style="left:1492px;color:#cf2f37" viewBox="0 0 24 24" fill="none" stroke="currentColor" stroke-width="2" stroke-linecap="round" stroke-linejoin="round"><path d="M3 6h18"/><path d="M19 6v14c0 1-1 2-2 2H7c-1 0-2-1-2-2V6"/><path d="M8 6V4c0-1 1-2 2-2h4c1 0 2 1 2 2v2"/><line x1="10" x2="10" y1="11" y2="17"/><line x1="14" x2="14" y1="11" y2="17"/></svg></div><div class="row" style="top:594px"><span class="c" style="left:17px">Super Admin</span><span class="c" style="left:204px;letter-spacing:0.22px">Tower E/Fourth Floor/1002</span><span class="c" style="left:549px">332-234-3187</span><span class="c" style="left:817px">2025-02-01</span><span class="badge ten" style="left:1015px">Tenant</span><span class="badge sec" style="left:1224px">Secondary</span><svg class="act" style="left:1420px;color:#239358" viewBox="0 0 24 24" fill="none" stroke="currentColor" stroke-width="2" stroke-linecap="round" stroke-linejoin="round"><path d="M2.062 12.348a1 1 0 0 1 0-.696 10.75 10.75 0 0 1 19.876 0 1 1 0 0 1 0 .696 10.75 10.75 0 0 1-19.876 0"/><circle cx="12" cy="12" r="3"/></svg><svg class="act" style="left:1456px;color:#3a76dd" viewBox="0 0 24 24" fill="none" stroke="currentColor" stroke-width="2" stroke-linecap="round" stroke-linejoin="round"><path d="M12 3H5a2 2 0 0 0-2 2v14a2 2 0 0 0 2 2h14a2 2 0 0 0 2-2v-7"/><path d="M18.375 2.625a1 1 0 0 1 3 3l-9.013 9.014a2 2 0 0 1-.853.505l-2.873.84a.5.5 0 0 1-.62-.62l.84-2.873a2 2 0 0 1 .506-.852z"/></svg><svg class="act" style="left:1492px;color:#cf2f37" viewBox="0 0 24 24" fill="none" stroke="currentColor" stroke-width="2" stroke-linecap="round" stroke-linejoin="round"><path d="M3 6h18"/><path d="M19 6v14c0 1-1 2-2 2H7c-1 0-2-1-2-2V6"/><path d="M8 6V4c0-1 1-2 2-2h4c1 0 2 1 2 2v2"/><line x1="10" x2="10" y1="11" y2="17"/><line x1="14" x2="14" y1="11" y2="17"/></svg></div><div class="row" style="top:659px"><span class="c" style="left:17px">Super Admin</span><span class="c" style="left:204px;letter-spacing:0.22px">Tower A/Ninth Floor/1002</span><span class="c" style="left:549px">810-153-7821</span><span class="c" style="left:817px">2024-08-01</span><span class="badge ten" style="left:1015px">Tenant</span><span class="badge sec" style="left:1224px">Secondary</span><svg class="act" style="left:1420px;color:#239358" viewBox="0 0 24 24" fill="none" stroke="currentColor" stroke-width="2" stroke-linecap="round" stroke-linejoin="round"><path d="M2.062 12.348a1 1 0 0 1 0-.696 10.75 10.75 0 0 1 19.876 0 1 1 0 0 1 0 .696 10.75 10.75 0 0 1-19.876 0"/><circle cx="12" cy="12" r="3"/></svg><svg class="act" style="left:1456px;color:#3a76dd" viewBox="0 0 24 24" fill="none" stroke="currentColor" stroke-width="2" stroke-linecap="round" stroke-linejoin="round"><path d="M12 3H5a2 2 0 0 0-2 2v14a2 2 0 0 0 2 2h14a2 2 0 0 0 2-2v-7"/><path d="M18.375 2.625a1 1 0 0 1 3 3l-9.013 9.014a2 2 0 0 1-.853.505l-2.873.84a.5.5 0 0 1-.62-.62l.84-2.873a2 2 0 0 1 .506-.852z"/></svg><svg class="act" style="left:1492px;color:#cf2f37" viewBox="0 0 24 24" fill="none" stroke="currentColor" stroke-width="2" stroke-linecap="round" stroke-linejoin="round"><path d="M3 6h18"/><path d="M19 6v14c0 1-1 2-2 2H7c-1 0-2-1-2-2V6"/><path d="M8 6V4c0-1 1-2 2-2h4c1 0 2 1 2 2v2"/><line x1="10" x2="10" y1="11" y2="17"/><line x1="14" x2="14" y1="11" y2="17"/></svg></div><div class="row" style="top:724px"><span class="c" style="left:17px">Super Admin</span><span class="c" style="left:204px;letter-spacing:0.22px">Tower E/Fourth Floor/1003</span><span class="c" style="left:549px">710-997-2464</span><span class="c" style="left:817px">2025-12-06</span><span class="badge ten" style="left:1015px">Tenant</span><span class="badge sec" style="left:1224px">Secondary</span><svg class="act" style="left:1420px;color:#239358" viewBox="0 0 24 24" fill="none" stroke="currentColor" stroke-width="2" stroke-linecap="round" stroke-linejoin="round"><path d="M2.062 12.348a1 1 0 0 1 0-.696 10.75 10.75 0 0 1 19.876 0 1 1 0 0 1 0 .696 10.75 10.75 0 0 1-19.876 0"/><circle cx="12" cy="12" r="3"/></svg><svg class="act" style="left:1456px;color:#3a76dd" viewBox="0 0 24 24" fill="none" stroke="currentColor" stroke-width="2" stroke-linecap="round" stroke-linejoin="round"><path d="M12 3H5a2 2 0 0 0-2 2v14a2 2 0 0 0 2 2h14a2 2 0 0 0 2-2v-7"/><path d="M18.375 2.625a1 1 0 0 1 3 3l-9.013 9.014a2 2 0 0 1-.853.505l-2.873.84a.5.5 0 0 1-.62-.62l.84-2.873a2 2 0 0 1 .506-.852z"/></svg><svg class="act" style="left:1492px;color:#cf2f37" viewBox="0 0 24 24" fill="none" stroke="currentColor" stroke-width="2" stroke-linecap="round" stroke-linejoin="round"><path d="M3 6h18"/><path d="M19 6v14c0 1-1 2-2 2H7c-1 0-2-1-2-2V6"/><path d="M8 6V4c0-1 1-2 2-2h4c1 0 2 1 2 2v2"/><line x1="10" x2="10" y1="11" y2="17"/><line x1="14" x2="14" y1="11" y2="17"/></svg></div>
    <div id="foot">
      <span class="abs" style="left:24px;top:32px;line-height:20px;color:#6b6b70;letter-spacing:0.1px">Showing 1 to 10 of 25 results</span>
      <div class="pg" style="left:1262px;top:26px;width:107px;height:32px;line-height:30px;color:#7a7a7e;background:#fdfdfd;border-color:#ececec">
        <svg class="abs" style="left:12px;top:7px" width="16" height="16" viewBox="0 0 16 16" fill="none" stroke="#777" stroke-width="1.5" stroke-linecap="round" stroke-linejoin="round"><path d="M10 3.5 L6 8 L10 12.5"/></svg>
        <span class="abs med" style="left:37px;top:0">Previous</span>
      </div>
      <div class="pg" style="left:1381px;top:24px;width:31px;height:36px;line-height:36px;background:#21b585;border:0;color:#e6fff4"><span class="med">1</span></div>
      <div class="pg" style="left:1424px;top:24px;width:34px;height:36px;line-height:34px;color:#111"><span class="med">2</span></div>
      <div class="pg" style="left:1470px;top:24px;width:34px;height:36px;line-height:34px;color:#111"><span class="med">3</span></div>
      <div class="pg" style="left:1516px;top:26px;width:82px;height:32px;line-height:30px;color:#111">
        <span class="abs med" style="left:13px;top:0">Next</span>
        <svg class="abs" style="left:50px;top:7px" width="16" height="16" viewBox="0 0 16 16" fill="none" stroke="#111" stroke-width="1.6" stroke-linecap="round" stroke-linejoin="round"><path d="M6 3.5 L10 8 L6 12.5"/></svg>
      </div>
    </div>
  </div>
</div>
<div id="ptopfade"></div>
</body></html>
